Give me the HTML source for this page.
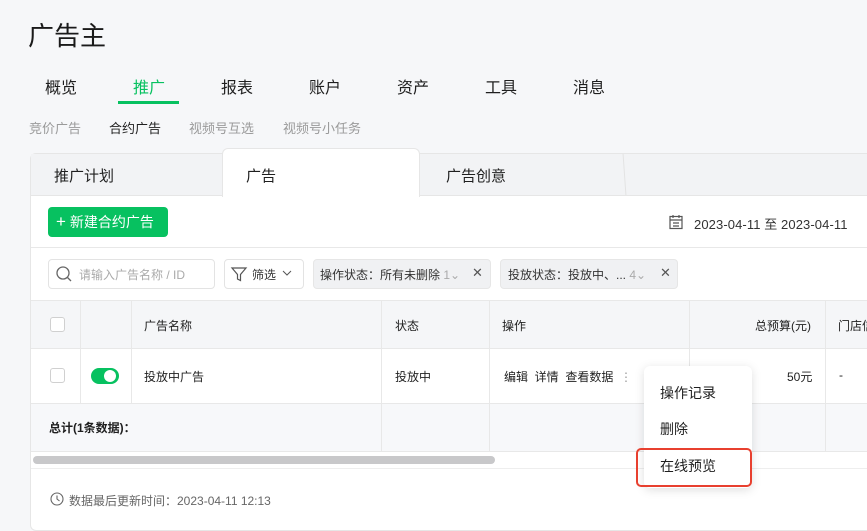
<!DOCTYPE html>
<html><head><meta charset="utf-8"><style>
*{margin:0;padding:0;box-sizing:border-box}
body{width:867px;height:531px;background:#f6f7f9;font-family:"Liberation Sans","Noto Sans CJK SC",sans-serif;position:relative;overflow:hidden;color:#1f1f1f}
.a{position:absolute;white-space:nowrap}
.t13{font-size:13px}.t12{font-size:12px}
.vl{position:absolute;width:1px;background:#e8e8e8}
.hl{position:absolute;height:1px;background:#e8e8e8}
</style></head><body>
<div class="a" style="left:28px;top:16px;font-size:26px;color:#1a1a1a">广告主</div>
<div class="a" style="left:45px;top:74px;font-size:16px">概览</div>
<div class="a" style="left:133px;top:74px;font-size:16px;color:#07c160">推广</div>
<div class="a" style="left:118px;top:101px;width:61px;height:3px;background:#07c160"></div>
<div class="a" style="left:221px;top:74px;font-size:16px">报表</div>
<div class="a" style="left:309px;top:74px;font-size:16px">账户</div>
<div class="a" style="left:397px;top:74px;font-size:16px">资产</div>
<div class="a" style="left:485px;top:74px;font-size:16px">工具</div>
<div class="a" style="left:573px;top:74px;font-size:16px">消息</div>
<div class="a t13" style="left:29px;top:118px;color:#9a9a9a">竞价广告</div>
<div class="a t13" style="left:109px;top:118px;color:#1f1f1f">合约广告</div>
<div class="a t13" style="left:189px;top:118px;color:#9a9a9a">视频号互选</div>
<div class="a t13" style="left:283px;top:118px;color:#9a9a9a">视频号小任务</div>

<div class="a" style="left:30px;top:153px;width:860px;height:378px;background:#fff;border:1px solid #e6e6e6;border-radius:6px"></div>
<div class="a" style="left:31px;top:154px;width:860px;height:42px;background:#f2f3f5;border-bottom:1px solid #e6e6e6"></div>
<div class="a" style="left:420px;top:154px;width:205px;height:41px;border-right:1px solid #e3e3e3;transform:skewX(4deg)"></div>
<div class="a" style="left:222px;top:148px;width:198px;height:49px;background:#fff;border:1px solid #e6e6e6;border-bottom:none;border-radius:6px 6px 0 0"></div>
<div class="a" style="left:54px;top:165px;font-size:15px">推广计划</div>
<div class="a" style="left:246px;top:165px;font-size:15px">广告</div>
<div class="a" style="left:446px;top:165px;font-size:15px">广告创意</div>

<div class="a" style="left:48px;top:207px;width:120px;height:30px;background:#07c160;border-radius:4px;color:#fff;font-size:14px;line-height:30px;padding-left:8px"><span style="font-size:17px">+</span> 新建合约广告</div>
<svg class="a" style="left:668px;top:214px" width="16" height="16" viewBox="0 0 16 16" fill="none" stroke="#555" stroke-width="1.2"><rect x="2" y="2.5" width="12" height="12"/><path d="M2 6h12M5 1v3M11 1v3M5 9h6M5 12h6"/></svg>
<div class="a t13" style="left:694px;top:214px;color:#333;letter-spacing:0.1px">2023-04-11 至 2023-04-11</div>
<div class="hl" style="left:31px;top:247px;width:840px"></div>

<div class="a" style="left:48px;top:259px;width:167px;height:30px;border:1px solid #e3e3e3;border-radius:4px"></div>
<svg class="a" style="left:55px;top:265px" width="18" height="18" viewBox="0 0 18 18" fill="none" stroke="#666" stroke-width="1.3"><circle cx="8" cy="8" r="6"/><path d="M12.5 12.5l3.5 3.5"/></svg>
<div class="a t12" style="left:79px;top:266px;color:#aaa">请输入广告名称 / ID</div>
<div class="a" style="left:224px;top:259px;width:80px;height:30px;border:1px solid #e3e3e3;border-radius:4px"></div>
<svg class="a" style="left:230px;top:265px" width="18" height="18" viewBox="0 0 18 18" fill="none" stroke="#555" stroke-width="1.2"><path d="M2 3h14l-5.5 6.5v6l-3-1.5v-4.5z"/></svg>
<div class="a t12" style="left:252px;top:266px;color:#333">筛选</div>
<svg class="a" style="left:282px;top:268px" width="10" height="10" viewBox="0 0 10 10" fill="none" stroke="#555"><path d="M1 3l4 4 4-4"/></svg>
<div class="a" style="left:313px;top:259px;width:178px;height:30px;background:#f0f1f3;border:1px solid #e6e6e6;border-radius:4px"></div>
<div class="a t12" style="left:320px;top:266px;color:#333">操作状态：所有未删除 <span style="color:#aaa">1⌄</span></div>
<div class="a" style="left:472px;top:265px;font-size:13px;color:#555">✕</div>
<div class="a" style="left:500px;top:259px;width:178px;height:30px;background:#f0f1f3;border:1px solid #e6e6e6;border-radius:4px"></div>
<div class="a t12" style="left:508px;top:266px;color:#333">投放状态：投放中、... <span style="color:#aaa">4⌄</span></div>
<div class="a" style="left:660px;top:265px;font-size:13px;color:#555">✕</div>

<div class="a" style="left:31px;top:300px;width:840px;height:48px;background:#f5f6f8"></div>
<div class="a" style="left:31px;top:403px;width:840px;height:48px;background:#f7f8fa"></div>
<div class="hl" style="left:31px;top:300px;width:840px"></div>
<div class="hl" style="left:31px;top:348px;width:840px"></div>
<div class="hl" style="left:31px;top:403px;width:840px"></div>
<div class="hl" style="left:31px;top:451px;width:840px"></div>
<div class="hl" style="left:31px;top:468px;width:840px;background:#eee"></div>
<div class="vl" style="left:80px;top:300px;height:103px"></div>
<div class="vl" style="left:131px;top:300px;height:103px"></div>
<div class="vl" style="left:381px;top:300px;height:151px"></div>
<div class="vl" style="left:489px;top:300px;height:151px"></div>
<div class="vl" style="left:689px;top:300px;height:151px"></div>
<div class="vl" style="left:825px;top:300px;height:151px"></div>
<div class="a" style="left:50px;top:317px;width:15px;height:15px;border:1px solid #d0d0d0;border-radius:3px;background:#fff"></div>
<div class="a" style="left:50px;top:368px;width:15px;height:15px;border:1px solid #d0d0d0;border-radius:3px;background:#fff"></div>
<div class="a t12" style="left:144px;top:317px">广告名称</div>
<div class="a t12" style="left:395px;top:317px">状态</div>
<div class="a t12" style="left:502px;top:317px">操作</div>
<div class="a t12" style="left:755px;top:317px">总预算(元)</div>
<div class="a t12" style="left:838px;top:317px">门店信</div>
<div class="a" style="left:91px;top:368px;width:28px;height:16px;background:#07c160;border-radius:8px"></div>
<div class="a" style="left:104px;top:370px;width:12px;height:12px;background:#fff;border-radius:50%"></div>
<div class="a t12" style="left:144px;top:368px">投放中广告</div>
<div class="a t12" style="left:395px;top:368px">投放中</div>
<div class="a t12" style="left:504px;top:368px">编辑 &nbsp;详情 &nbsp;查看数据 &nbsp;<span style="color:#999">⋮</span></div>
<div class="a t12" style="left:787px;top:368px">50元</div>
<div class="a t12" style="left:839px;top:368px">-</div>
<div class="a t12" style="left:49px;top:419px;font-weight:bold">总计(1条数据)：</div>
<div class="a" style="left:33px;top:456px;width:462px;height:8px;background:#c8c8ca;border-radius:4px"></div>
<svg class="a" style="left:50px;top:492px" width="14" height="14" viewBox="0 0 14 14" fill="none" stroke="#666" stroke-width="1.1"><circle cx="7" cy="7" r="6"/><path d="M7 3.5V7l2.5 2"/></svg>
<div class="a t12" style="left:69px;top:492px;color:#666">数据最后更新时间：2023-04-11 12:13</div>

<div class="a" style="left:644px;top:366px;width:108px;height:122px;background:#fff;border-radius:6px;box-shadow:0 2px 10px rgba(0,0,0,.13)"></div>
<div class="a" style="left:636px;top:448px;width:116px;height:39px;border:2px solid #e8402f;border-radius:5px"></div>
<div class="a" style="left:660px;top:383px;font-size:14px">操作记录</div>
<div class="a" style="left:660px;top:419px;font-size:14px">删除</div>
<div class="a" style="left:660px;top:456px;font-size:14px">在线预览</div>
</body></html>
